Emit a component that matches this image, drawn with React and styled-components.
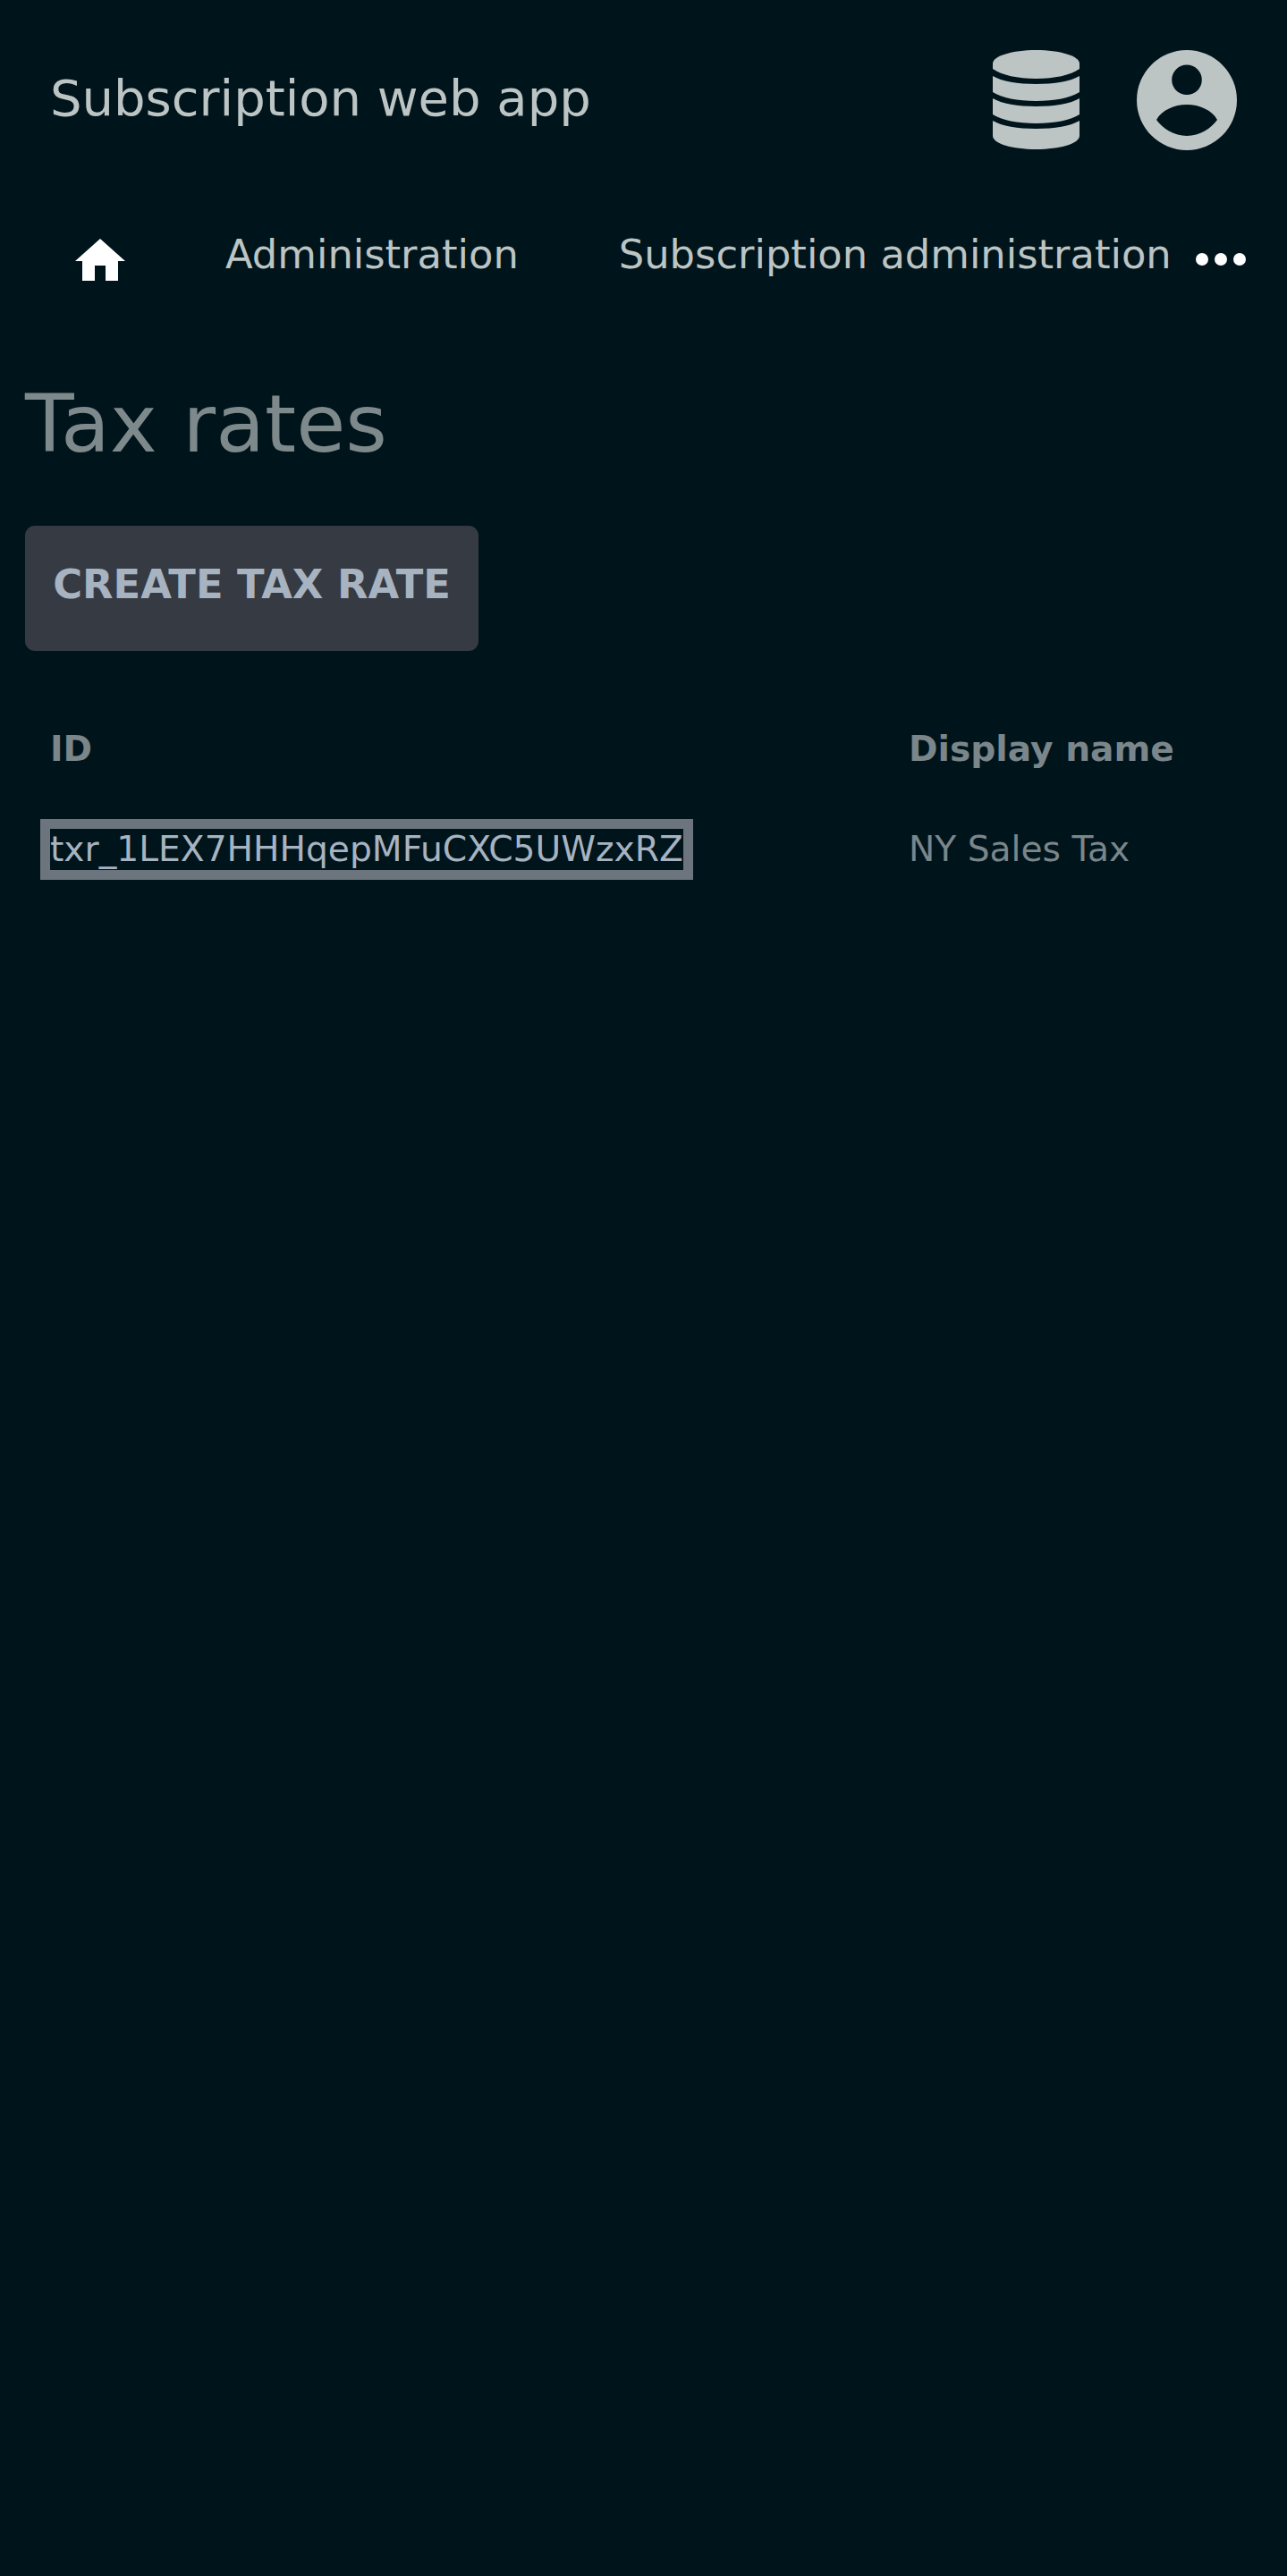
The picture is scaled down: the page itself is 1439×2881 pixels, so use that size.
import React from 'react'
import styled, { createGlobalStyle } from 'styled-components'

const colors = {
  page: '#00141b',
  light: '#bcc4c4',
  muted: '#7a868a',
  heading: '#7e898c',
  button: '#363a43',
  buttonText: '#a7b3c0',
  outline: '#6c757d',
  idText: '#a7b3c0',
  white: '#ffffff'
}

const GlobalStyle = createGlobalStyle`
  html, body {
    margin: 0;
    background: ${colors.page};
  }
  body {
    font-family: "DejaVu Sans", sans-serif;
    font-size: 39.2px;
  }
`

const Page = styled.div`
  width: 1439px;
  min-height: 2881px;
  overflow: hidden;
`
const Header = styled.header`
  display: flex;
  align-items: center;
  height: 111px;
  padding: 56px 56px 0;
`
const Brand = styled.div`
  flex: 1 1 auto;
  color: ${colors.light};
  font-size: 56px;
  line-height: 107px;
  align-self: flex-start;
`
const IconButton = styled.div`
  display: flex;
  margin-left: ${props => props.gap}px;
  color: ${colors.light};
`
const Nav = styled.nav`
  display: flex;
  align-items: flex-start;
  height: 80px;
  margin-top: 95px;
  padding-left: 28px;
`
const NavLink = styled.a`
  padding: 0 ${props => props.right || 56}px 0 56px;
  color: ${colors.light};
  font-size: 44.8px;
  line-height: 46px;
  white-space: nowrap;
`
const HomeLink = styled.a`
  display: flex;
  padding: 5px 56px 0;
  color: ${colors.white};
`
const MoreLink = styled.a`
  display: flex;
  padding-top: 21px;
  color: ${colors.white};
`
const Content = styled.main`
  padding: 0 28px;
`
const Title = styled.h1`
  margin: 78px 0 0;
  color: ${colors.heading};
  font-size: 89.6px;
  font-weight: 400;
  line-height: 108px;
`
const Button = styled.button`
  display: block;
  width: 507px;
  height: 140px;
  margin-top: 60px;
  padding: 0 0 9px;
  border: 0;
  border-radius: 11px;
  background: ${colors.button};
  color: ${colors.buttonText};
  font-family: inherit;
  font-size: 44.8px;
  font-weight: 700;
  text-align: center;
`
const Table = styled.div`
  display: grid;
  grid-template-columns: 960px 1fr;
  margin-top: 76px;
`
const HeadCell = styled.div`
  padding-left: 28px;
  color: ${colors.muted};
  font-weight: 700;
  line-height: 68px;
`
const Cell = styled.div`
  padding: 55px 0 0 28px;
  color: ${colors.muted};
  line-height: 46px;
`
const IdLink = styled.a`
  display: inline-block;
  outline: 11px solid ${colors.outline};
  color: ${colors.idText};
  white-space: nowrap;
`

const DatabaseIcon = () => (
  <svg width="97" height="111" viewBox="0 0 97 111" fill="currentColor">
    <path d="M0 15C0 6.700 21.700 0 48.500 0S97 6.700 97 15V21C87 28 69 32 48.500 32S10 28 0 21z" />
    <path d="M0 29C10 35 28 38 48.500 38S87 35 97 29V47C87 53.500 69 57 48.500 57S10 53.500 0 47z" />
    <path d="M0 54C10 60 28 63 48.500 63S87 60 97 54V72C87 78.500 69 82 48.500 82S10 78.500 0 72z" />
    <path d="M0 79C10 85 28 88 48.500 88S87 85 97 79V96C97 104.500 75 111 48.500 111S0 104.500 0 96z" />
  </svg>
)

const UserCircleIcon = () => (
  <svg width="112" height="112" viewBox="0 0 112 112" fill="currentColor">
    <path
      fillRule="evenodd"
      d="M56 0a56 56 0 1 1 0 112A56 56 0 0 1 56 0zm0 16.500a16.800 16.800 0 1 0 0 33.600 16.800 16.800 0 0 0 0-33.600zM22 78C28 67 42 61 56 61S84 67 90 78C84 87 70 96 56 96S28 87 22 78z"
    />
  </svg>
)

const HomeIcon = () => (
  <svg width="56" height="47" viewBox="0 0 56 47" fill="currentColor">
    <path d="M28 0 56 25H48V47H34V30H22V47H8V25H0z" />
  </svg>
)

const DotsIcon = () => (
  <svg width="56" height="14" viewBox="0 0 56 14" fill="currentColor">
    <circle cx="7" cy="7" r="7" />
    <circle cx="28" cy="7" r="7" />
    <circle cx="49" cy="7" r="7" />
  </svg>
)

const App = () => (
  <Page>
    <GlobalStyle />
    <Header>
      <Brand>Subscription web app</Brand>
      <IconButton>
        <DatabaseIcon />
      </IconButton>
      <IconButton gap={64}>
        <UserCircleIcon />
      </IconButton>
    </Header>
    <Nav>
      <HomeLink>
        <HomeIcon />
      </HomeLink>
      <NavLink>Administration</NavLink>
      <NavLink right={27}>Subscription administration</NavLink>
      <MoreLink>
        <DotsIcon />
      </MoreLink>
    </Nav>
    <Content>
      <Title>Tax rates</Title>
      <Button>CREATE TAX RATE</Button>
      <Table>
        <HeadCell>ID</HeadCell>
        <HeadCell>Display name</HeadCell>
        <Cell>
          <IdLink>txr_1LEX7HHHqepMFuCXC5UWzxRZ</IdLink>
        </Cell>
        <Cell>NY Sales Tax</Cell>
      </Table>
    </Content>
  </Page>
)

export default App
